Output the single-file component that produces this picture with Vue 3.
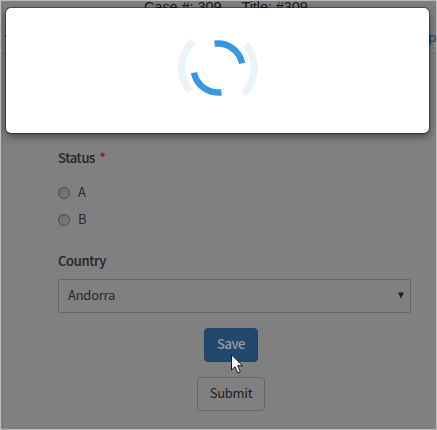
<script setup>
import { ref } from 'vue'

const options = ['A', 'B']
const status = ref('')
const country = ref('Andorra')

const cx = 218 - 6
const cy = 68 - 8
const point = (r, deg) => {
  const a = (deg * Math.PI) / 180
  return `${(cx + r * Math.cos(a)).toFixed(2)} ${(cy + r * Math.sin(a)).toFixed(2)}`
}
const arc = (r, from, to) => `M${point(r, from)}A${r} ${r} 0 0 1 ${point(r, to)}`
const outer = [arc(36.4, 141, 227), arc(36.4, -40, 46)]
const inner = [arc(24.5, -98, -11), arc(24.5, 82, 169)]
</script>

<template>
  <div class="page">
    <header class="case"><span>Case #: 309</span><span>Title: #309</span></header>
    <nav class="tabs"><span class="mark"></span><a class="help">p</a></nav>
    <form class="form" @submit.prevent>
      <div class="label">Status <span class="required">*</span></div>
      <div class="options">
        <label v-for="o in options" :key="o" class="option">
          <input v-model="status" type="radio" name="status" :value="o" class="radio" />
          <span class="text">{{ o }}</span>
        </label>
      </div>
      <div class="label country">Country</div>
      <div class="select">
        <span>{{ country }}</span>
        <svg class="caret" width="6" height="7" viewBox="0 0 6 7"><path d="M0 0.5H6L3 6.5Z" fill="#202020" /></svg>
      </div>
      <div class="actions">
        <button type="button" class="btn save">Save</button>
        <button type="submit" class="btn submit">Submit</button>
      </div>
    </form>

    <div class="modal">
      <svg width="423" height="125" viewBox="0 0 423 125" fill="none">
        <path v-for="d in outer" :key="d" :d="d" stroke="#e8f3fc" stroke-width="7.2" />
        <path v-for="d in inner" :key="d" :d="d" stroke="#3498e6" stroke-width="6.4" />
      </svg>
    </div>

    <svg class="cursor" width="13" height="21" viewBox="0 0 13 21">
      <path d="M0.5 0.8V16L4 12.7L6.7 18.8L9.3 17.7L6.7 11.7H11.5Z" fill="#fff" stroke="#15152a" stroke-width="1" />
    </svg>
  </div>
</template>

<style>
body {
  margin: 0;
}
</style>

<style scoped>
.page {
  box-sizing: border-box;
  position: relative;
  width: 437px;
  height: 430px;
  overflow: hidden;
  background: #808080;
  border: 1px solid #b8bab9;
  box-shadow: inset 1px 0 #898c8b, inset 2px 0 #717373;
  color: #292929;
  font-family: "Noto Sans CJK SC", "Noto Sans", sans-serif;
  font-size: 13px;
  line-height: 20px;
  letter-spacing: -0.25px;
}
.case {
  display: flex;
  gap: 20px;
  height: 26px;
  padding: 0 0 0 143px;
  font-family: "Liberation Sans", sans-serif;
  font-size: 14.5px;
  line-height: 12px;
  letter-spacing: -0.07px;
  color: #191919;
}
.tabs {
  box-sizing: border-box;
  display: flex;
  justify-content: space-between;
  height: 27px;
  padding: 0 0 0 4px;
  border-bottom: 1px solid #6d6d6d;
  line-height: 20px;
}
.mark {
  width: 2px;
  height: 2px;
  margin-top: 8px;
  background: #4a2216;
}
.help {
  color: #213f63;
}
.form {
  padding: 94px 25px 0 57px;
}
.label {
  height: 20px;
  font-weight: 500;
  letter-spacing: -0.35px;
  -webkit-text-stroke: 0.15px currentColor;
}
.required {
  margin-left: 2px;
  color: #831f1b;
}
.options {
  box-sizing: border-box;
  width: 324px;
  height: 53px;
  margin-top: 8px;
  border: 1px solid #7b7b7b;
  border-bottom: 0;
}
.option {
  display: flex;
  align-items: center;
  gap: 8px;
  height: 27px;
  margin-left: -1px;
}
.text {
  padding-top: 2px;
}
.radio {
  box-sizing: border-box;
  appearance: none;
  width: 12px;
  height: 12px;
  margin: 4px 0 0;
  border: 1px solid #4c4c4c;
  border-radius: 50%;
  background: linear-gradient(135deg, #6b6b6b, #7b7b7b);
}
.country {
  margin-top: 22px;
}
.select {
  box-sizing: border-box;
  display: flex;
  align-items: center;
  justify-content: space-between;
  width: 353px;
  height: 34px;
  margin-top: 8px;
  padding: 0 6px 2px 9px;
  border: 1px solid #666;
  border-radius: 2px;
}
.caret {
  margin-top: 1px;
}
.actions {
  display: flex;
  flex-direction: column;
  align-items: center;
  gap: 15px;
  width: 346px;
  margin-top: 15px;
}
.btn {
  box-sizing: border-box;
  height: 34px;
  padding: 0 0 3px;
  border: 1px solid #666;
  border-radius: 4px;
  background: transparent;
  color: #202020;
  font: inherit;
  letter-spacing: -0.25px;
}
.save {
  width: 54px;
  border-color: #20435f;
  background: #21496e;
  color: #959ba1;
  font-weight: 500;
  letter-spacing: -0.4px;
}
.submit {
  width: 68px;
}
.modal {
  position: absolute;
  top: 7px;
  left: 5px;
  width: 423px;
  height: 125px;
  border-radius: 5px;
  background: #fff;
  box-shadow: 0 0 0 1px rgba(0, 0, 0, 0.35), 0 3px 9px rgba(0, 0, 0, 0.5);
}
.modal svg {
  display: block;
}
.cursor {
  position: absolute;
  top: 353px;
  left: 230px;
}
</style>
